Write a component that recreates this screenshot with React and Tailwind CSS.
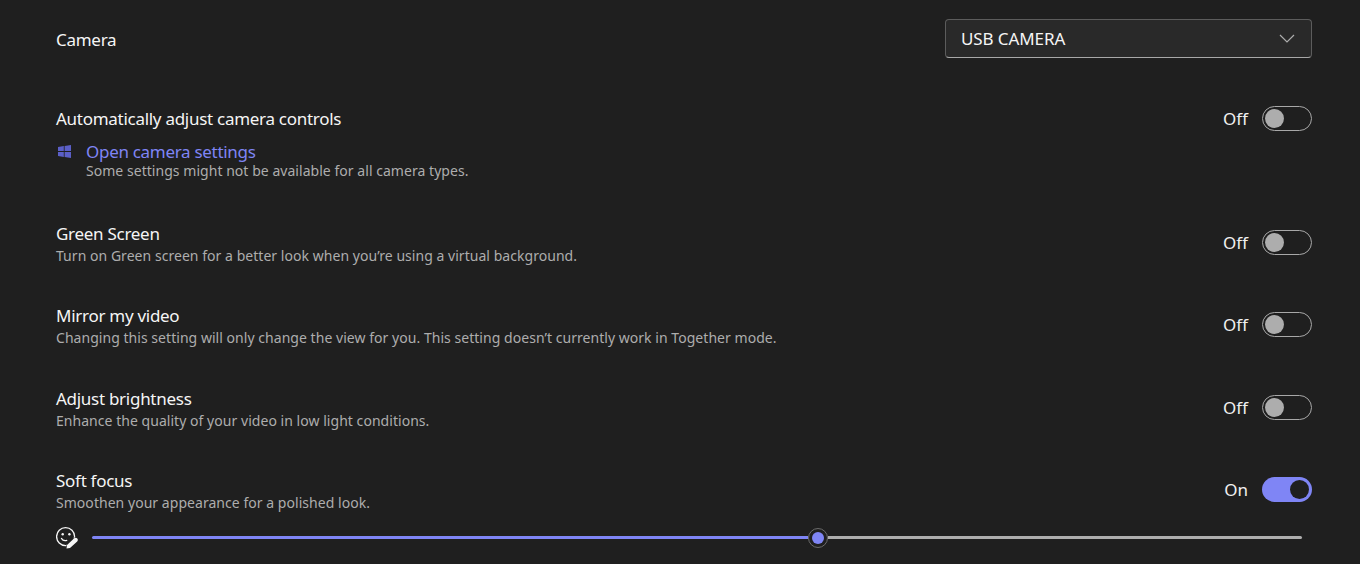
import React from 'react';

const Toggle = ({ on }) => (
    <div className="flex items-center justify-end w-[100px]">
        <span className="text-[17px] leading-6 text-[#f0f0f0]">{on ? 'On' : 'Off'}</span>
        <div
            className={`ml-[14px] w-[50px] h-[25px] rounded-full flex items-center ${on
                ? 'bg-[#7f85f5] justify-end pr-[3px]'
                : 'border border-[#a8a8a8] justify-start pl-[2px]'
                }`}
        >
            <div className={`w-[19px] h-[19px] rounded-full ${on ? 'bg-[#1f1f1f]' : 'bg-[#adadad]'}`}></div>
        </div>
    </div>
);

const SettingRow = ({ title, desc, on, className }) => (
    <div className={`flex items-center justify-between ${className}`}>
        <div>
            <div className="text-[17px] leading-[20px] tracking-[-0.28px] text-[#f5f5f5]">{title}</div>
            <div className="mt-[2px] text-[14px] leading-[20px] tracking-[0.04px] text-[#adadad]">{desc}</div>
        </div>
        <div className="mb-[5px]">
            <Toggle on={on} />
        </div>
    </div>
);

const WindowsIcon = () => (
    <svg width="13" height="13" viewBox="0 0 13 13" fill="#5b5fc7">
        <path d="M0 2 L5.8 1.1 V6 H0 Z" />
        <path d="M6.6 1 L13 0 V6 H6.6 Z" />
        <path d="M0 7 H5.8 V11.9 L0 11 Z" />
        <path d="M6.6 7 H13 V13 L6.6 12 Z" />
    </svg>
);

const SmileEditIcon = () => (
    <svg width="23" height="23" viewBox="0 0 23 23" fill="none">
        <circle cx="9.6" cy="10.6" r="9" stroke="#f5f5f5" strokeWidth="1.3" />
        <circle cx="6.7" cy="8.3" r="1.2" fill="#f5f5f5" />
        <circle cx="13.4" cy="8.3" r="1.2" fill="#f5f5f5" />
        <path d="M5.4 12.4 C6.6 14.4 8.8 15 10.8 14.4" stroke="#f5f5f5" strokeWidth="1.2" strokeLinecap="round" />
        <path
            d="M10.5 22.6 L11 19 L18 12.5 C19 11.6 20.5 11.7 21.3 12.6 C22.1 13.5 22 14.8 21.2 15.6 L14 22 Z"
            fill="#f5f5f5"
            stroke="#1f1f1f"
            strokeWidth="1"
            paintOrder="stroke"
        />
    </svg>
);

export default function App() {
    return (
        <div className="w-[1360px] h-[564px] overflow-hidden bg-[#1f1f1f] pl-[56px] pr-[48px] pt-[19px]" style={{ fontFamily: '"Noto Sans", sans-serif' }}>
            <div className="flex items-center justify-between">
                <div className="mt-[2px] text-[17px] tracking-[-0.28px] text-[#f5f5f5]">Camera</div>
                <div className="w-[367px] h-[39px] rounded-[4px] bg-[#292929] border border-[#5c5c5c] border-b-[#a8a8a8] flex items-center justify-between pl-[15px] pr-[16px]">
                    <span className="text-[17px] tracking-[-0.1px] text-[#f5f5f5]">USB CAMERA</span>
                    <svg width="16" height="9" viewBox="0 0 16 9" fill="none">
                        <path d="M1 1 L8 8 L15 1" stroke="#adadad" strokeWidth="1.2" />
                    </svg>
                </div>
            </div>

            <div className="flex items-start justify-between mt-[51px]">
                <div>
                    <div className="text-[17px] leading-[20px] tracking-[-0.28px] text-[#f5f5f5]">Automatically adjust camera controls</div>
                    <div className="flex mt-[13px]">
                        <div className="w-[30px] pt-[3px] pl-[2px]"><WindowsIcon /></div>
                        <div>
                            <div className="text-[17px] leading-[20px] tracking-[-0.3px] text-[#7f85f5]">Open camera settings</div>
                            <div className="text-[14px] leading-[18px] tracking-[0.04px] text-[#adadad]">Some settings might not be available for all camera types.</div>
                        </div>
                    </div>
                </div>
                <div className="mt-[-3px]">
                    <Toggle />
                </div>
            </div>

            <SettingRow className="mt-[44px]" title="Green Screen" desc="Turn on Green screen for a better look when you’re using a virtual background." />
            <SettingRow className="mt-[40px]" title="Mirror my video" desc="Changing this setting will only change the view for you. This setting doesn’t currently work in Together mode." />
            <SettingRow className="mt-[41px]" title="Adjust brightness" desc="Enhance the quality of your video in low light conditions." />
            <SettingRow className="mt-[40px]" title="Soft focus" desc="Smoothen your appearance for a polished look." on />

            <div className="flex items-center mt-[13px]">
                <SmileEditIcon />
                <div className="flex items-center ml-[13px] w-[1210px]">
                    <div className="h-[3px] w-[716px] bg-[#7f85f5] rounded-l-full"></div>
                    <div className="w-[20px] h-[20px] rounded-full border border-[#6b6b6b] flex items-center justify-center shrink-0">
                        <div className="w-[12px] h-[12px] rounded-full bg-[#7f85f5]"></div>
                    </div>
                    <div className="h-[3px] flex-1 bg-[#adadad] rounded-r-full"></div>
                </div>
            </div>
        </div>
    );
}
